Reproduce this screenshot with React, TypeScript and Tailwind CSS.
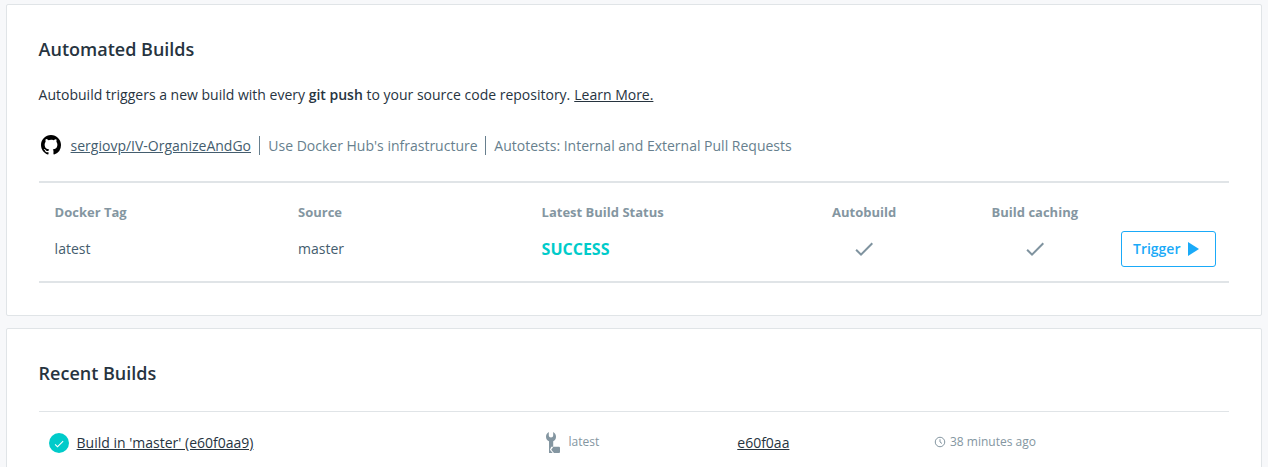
import React from "react";

function Check({ className }: { className: string }) {
  return (
    <svg viewBox="0 0 24 24" className={className} fill="currentColor">
      <path d="M9 16.17L4.83 12l-1.42 1.41L9 19 21 7l-1.41-1.41z" />
    </svg>
  );
}

export default function App() {
  return (
    <div className="h-[467px] overflow-hidden bg-[#f7f8fa] px-1.5 pt-1 font-['Open_Sans',sans-serif] text-sm leading-5 text-[#445d6e]">
      <section className="h-[312px] rounded-xs border border-[#e0e4e7] bg-white px-[31.6px] pt-8">
        <h2 className="h-6 text-lg leading-6 font-semibold text-[#27343f]">Automated Builds</h2>
        <p className="mt-6 h-5 text-[#27343f]">
          Autobuild triggers a new build with every <b className="font-semibold">git push</b> to your source code repository.{" "}
          <a className="ml-[.3px] underline">Learn More.</a>
        </p>
        <div className="mt-[29px] flex h-6 items-center text-[#677f8e]">
          <svg viewBox="0 0 16 16" className="-mt-0.5 ml-[2.4px] mr-[9.6px] size-5 text-black" fill="currentColor">
            <path d="M8 0C3.58 0 0 3.58 0 8c0 3.54 2.29 6.53 5.47 7.59.4.07.55-.17.55-.38 0-.19-.01-.82-.01-1.49-2.01.37-2.53-.49-2.69-.94-.09-.23-.48-.94-.82-1.13-.28-.15-.68-.52-.01-.53.63-.01 1.08.58 1.23.82.72 1.21 1.87.87 2.33.66.07-.52.28-.87.51-1.07-1.78-.2-3.64-.89-3.64-3.95 0-.87.31-1.59.82-2.15-.08-.2-.36-1.02.08-2.12 0 0 .67-.21 2.2.82A7.7 7.7 0 0 1 8 3.87c.68 0 1.36.09 2 .27 1.53-1.04 2.2-.82 2.2-.82.44 1.1.16 1.92.08 2.12.51.56.82 1.27.82 2.15 0 3.07-1.87 3.75-3.65 3.95.29.25.54.73.54 1.48 0 1.07-.01 1.93-.01 2.2 0 .21.15.46.55.38A8.01 8.01 0 0 0 16 8c0-4.42-3.58-8-8-8z" />
          </svg>
          <a className="text-[#445d6e] underline">sergiovp/IV-OrganizeAndGo</a>
          <span className="mb-px ml-[8.3px] h-[19px] border-l border-[#677f8e] pl-2">Use Docker Hub's infrastructure</span>
          <span className="mb-px ml-[7.8px] h-[19px] border-l border-[#677f8e] pl-2">Autotests: Internal and External Pull Requests</span>
        </div>
        <div className="mt-[23px] h-[102px] border-y-2 border-[#e0e4e7] pt-[19px]">
          <div className="grid h-5 grid-cols-[243.4px_243.6px_243px_160px_182px_1fr] pl-4 text-[13px] font-bold text-[#8496a1]">
            <span>Docker Tag</span><span>Source</span><span>Latest Build Status</span>
            <span className="pl-[47.4px]">Autobuild</span><span className="pl-[47px]">Build caching</span>
          </div>
          <div className="mt-[9px] grid h-9 grid-cols-[243.4px_243.6px_243px_160px_93px_1fr] items-center pl-4">
            <span>latest</span><span>master</span><b className="text-base text-[#00cbca]">SUCCESS</b>
            <Check className="ml-[67.4px] size-6 text-[#7f939f]" />
            <Check className="ml-[78.4px] size-6 text-[#7f939f]" />
            <button className="ml-[83.4px] flex h-9 w-[95px] items-center rounded-[3px] border border-[#1aaaf8] pl-[11px] font-semibold text-[#1aaaf8]">
              Trigger
              <svg viewBox="0 0 11 14" className="ml-2 h-3.5 w-[11px]" fill="currentColor"><path d="M0 0L11 7L0 14Z" /></svg>
            </button>
          </div>
        </div>
      </section>
      <section className="mt-3 h-40 rounded-xs border border-[#e0e4e7] bg-white px-[31.6px] pt-8">
        <h2 className="h-6 text-lg leading-6 font-semibold text-[#27343f]">Recent Builds</h2>
        <div className="mt-[26px] grid h-[62px] grid-cols-[507px_191.7px_196.3px_1fr] items-center border-t border-[#e0e4e7]">
          <div className="flex items-center text-[#27343f]">
            <span className="mr-[7.6px] ml-[10.4px] flex size-5 items-center justify-center rounded-full bg-[#00cbca] pt-0.5 text-white"><Check className="size-3" /></span>
            <a className="underline">Build in 'master' (e60f0aa9)</a>
          </div>
          <div className="flex items-center text-xs text-[#8496a1]">
            <svg viewBox="0 0 14 21" className="mb-px mr-[8.6px] ml-[.4px] h-[21px] w-3.5" fill="currentColor">
              <path d="M2.8 0v3.6q0 1.9 2.2 1.9t2.2-1.9V0C9 1 10 2.8 10 4.8 10 6.8 9 8.4 7.2 9.2v5.5H5.3L3.9 17.7 6.7 21H3V9.3C1 8.4 0 6.8 0 4.8S1 1 2.8 0Z" />
              <path d="m5.2 17.8 2.1-3.1H13q1 0 1 1V20q0 1-1 1H8Z" />
            </svg>
            <span className="mb-0.5">latest</span>
          </div>
          <a className="text-[#27343f] underline">e60f0aa</a>
          <div className="mb-0.5 flex items-center text-xs text-[#8496a1]">
            <svg viewBox="0 0 24 24" className="mr-1 ml-[.4px] size-3" fill="none" stroke="currentColor" strokeWidth="2"><circle cx="12" cy="12" r="9.5" /><path d="M12 6.5V12l4 3" /></svg>38 minutes ago
          </div>
        </div>
      </section>
    </div>
  );
}
